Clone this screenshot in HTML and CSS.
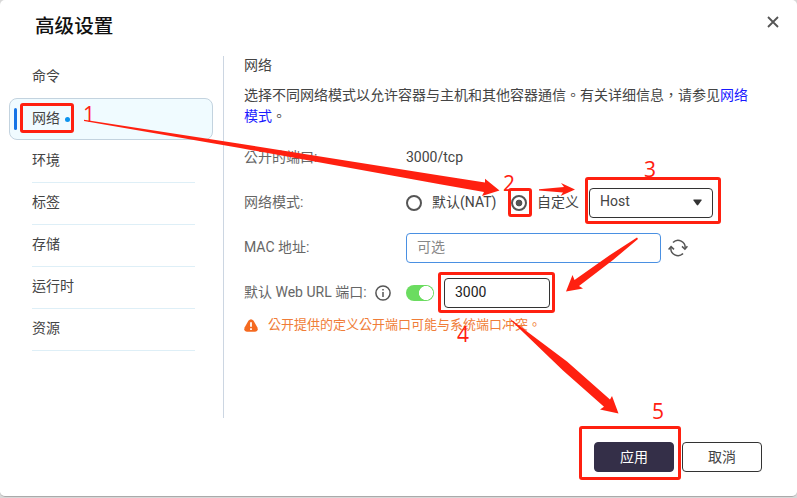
FILE: index.html
```html
<!DOCTYPE html>
<html lang="zh-Hant">
<head>
<meta charset="utf-8">
<title>高级设置</title>
<link rel="stylesheet" href="styles.css">
</head>
<body>
<div class="dialog">
  <header class="header">
    <h1 class="title">高级设置</h1>
    <svg class="close" width="12" height="12" viewBox="0 0 12 12"><path d="M1 1L11 11M11 1L1 11"/></svg>
  </header>
  <div class="main">
    <nav class="nav">
      <a class="item plain"><span>命令</span></a>
      <a class="item selected"><i class="bar"></i><span>网络</span><i class="dot"></i></a>
      <a class="item"><span>环境</span></a>
      <a class="item"><span>标签</span></a>
      <a class="item"><span>存储</span></a>
      <a class="item"><span>运行时</span></a>
      <a class="item"><span>资源</span></a>
    </nav>
    <section class="content">
      <h2 class="heading">网络</h2>
      <p class="desc">选择不同网络模式以允许容器与主机和其他容器通信。有关详细信息，请参见<a class="link">网络模式</a>。</p>
      <div class="row"><span class="label">公开的端口:</span><span class="text">3000/tcp</span></div>
      <div class="row">
        <span class="label">网络模式:</span>
        <i class="radio"></i><span class="nat">默认(NAT)</span>
        <i class="radio on"></i><span class="custom">自定义</span>
        <div class="select"><span class="text">Host</span><svg width="9" height="7" viewBox="0 0 9 7"><path fill="#333" d="M.8.5H8.2Q9 .5 8.5 1.4L5.2 6.1Q4.5 7 3.8 6.1L.5 1.4Q0 .5.8.5Z"/></svg></div>
      </div>
      <div class="row">
        <span class="label">MAC 地址:</span>
        <div class="input mac">可选</div>
        <svg class="refresh" width="20" height="18" viewBox="0 0 20 18"><path d="M5 3.6A7 7 0 0 1 17 9.5M15 14.4A7 7 0 0 1 3 8.5"/><path d="M14 7.4L16.9 10.2L19.4 7.2M.6 10.6L3.1 7.6L6 10.4"/></svg>
      </div>
      <div class="row">
        <span class="label"><span>默认 Web URL 端口:</span><svg class="info" width="16" height="16" viewBox="0 0 16 16"><circle cx="8" cy="8" r="7.1"/><path d="M8 7V12M8 4V5.6"/></svg></span>
        <i class="toggle"></i>
        <div class="input port">3000</div>
      </div>
      <div class="warning"><svg width="14" height="13" viewBox="0 0 14 13"><path class="tri" d="M4.4 1.8Q7-1.2 9.6 1.8L13.3 8.2Q14.8 12.4 11.2 12.8H2.8Q-.8 12.4.7 8.2Z"/><path class="mark" d="M7 3.2V7.8M7 9.3V11"/></svg>公开提供的定义公开端口可能与系统端口冲突。</div>
    </section>
  </div>
  <footer class="footer"><button class="btn primary">应用</button><button class="btn">取消</button></footer>
</div>
<svg class="marks" width="797" height="498" viewBox="0 0 797 498">
  <g class="boxes">
    <rect x="21.5" y="104.5" width="51" height="27" rx="1.5"/>
    <rect x="509.5" y="189.5" width="21" height="26" rx="1.5"/>
    <rect x="586.5" y="178.5" width="133" height="44" rx="1.5"/>
    <rect x="439.5" y="273.5" width="114" height="38" rx="1.5"/>
    <rect x="580.5" y="427.5" width="99" height="51" rx="1.5"/>
  </g>
  <g class="arrows">
    <path d="M84 119.7L240 143.7L440 175.5L485 182.5L485 178.8L499.5 190.5L482 196L484 192L440 184.2L240 148L84 121Z"/>
    <path d="M539 189.2L564 187L561 183L575 189.5L560.5 196L563 192.5L539 190.6Z"/>
    <path d="M637 237.5L610 255L574.5 280L572.5 275L566 291.5L583 288.5L579 286L613 260L638 239Z"/>
    <path d="M511 319.5L567 361.5L610 399.5L612 396L618.5 413.5L600 409.5L604 406.7L563 370.5L511 320.5Z"/>
  </g>
  <g class="nums"><text x="83" y="122">1</text><text x="503" y="191">2</text><text x="644" y="177">3</text><text x="457" y="342">4</text><text x="652" y="419">5</text></g>
</svg>
</body>
</html>
```
FILE: styles.css
```css
* { box-sizing: border-box; }
body {
  margin: 0; height: 498px; overflow: hidden; background: #d8d8d8; color: #444;
  font: 14px/20px Roboto, "Noto Sans CJK TC", sans-serif;
}
.dialog {
  display: flex; flex-direction: column; width: 797px; height: 497px;
  background: #fff; border-bottom: 1px solid #aaa; border-radius: 5px;
}
.header { display: flex; justify-content: space-between; height: 56px; padding: 13px 18px 0 35px; }
.title { margin: 0; font-size: 19.6px; line-height: 27px; font-weight: 500; color: #111; }
.close { margin-top: 3px; }
.close path { stroke: #555; stroke-width: 1.8; fill: none; }
.main { display: flex; height: 362px; }
.nav { width: 224px; border-right: 1px solid #ccd6e2; padding-left: 32px; }
.item { display: flex; align-items: center; width: 163px; height: 42px; padding-bottom: 3px; border-bottom: 1px solid #deeff7; }
.item.plain { padding-bottom: 2px; border-color: transparent; }
.item.selected {
  width: 204px; margin-left: -23px; padding: 0 0 0 4px;
  background: #f0fbff; border: 1px solid #c3d3df; border-radius: 8px;
}
.selected span { padding-bottom: 2px; }
.selected + .item { height: 43px; }
.bar { width: 3px; height: 22px; margin-right: 15px; border-radius: 2px; background: #1473e6; }
.dot { width: 5px; height: 5px; margin-left: 5px; border-radius: 50%; background: #0b93ee; }
.content { padding-left: 20px; }
.heading { margin: 0; font-size: 14px; font-weight: 400; line-height: 18px; }
.desc { width: 508px; margin: 11px 0 8px; line-height: 21px; }
.link { color: #1a1aff; }
.row { display: flex; align-items: center; height: 45px; color: #444; }
.text, .nat, .custom { padding-bottom: 2px; }
.select .text { padding-bottom: 3px; }
.label { display: flex; align-items: center; width: 162px; color: #666; line-height: 19px; white-space: nowrap; }
.radio { width: 16px; height: 16px; border: 2px solid #555; border-radius: 50%; }
.radio.on { margin-left: 15px; background: radial-gradient(circle, #555 3px, #fff 3.7px); }
.nat { width: 64px; margin-left: 10px; white-space: nowrap; }
.custom { margin-left: 10px; }
.select {
  display: flex; align-items: center; justify-content: space-between;
  width: 124px; height: 30px; margin-left: 10px; padding: 0 10px; border: 1px solid #333; border-radius: 4px;
}
.input { height: 30px; padding: 0 10px; border: 1px solid #333; border-radius: 4px; line-height: 26px; }
.mac { width: 255px; border-color: #4a90e2; color: #888; }
.refresh { margin-left: 7px; }
.refresh path, .info { fill: none; stroke: #555; stroke-width: 1.5; }
.info { margin-left: 8px; }
.toggle { width: 28px; height: 16px; border-radius: 8px; background: radial-gradient(circle at 20px 8px, #fff 6.7px, #6bdc60 7.3px); }
.port { width: 106px; margin-left: 10px; color: #222; }
.warning { display: flex; align-items: center; height: 20px; color: #f07d38; font-size: 13px; }
.warning svg { margin-right: 10px; }
.tri { fill: #f56a20; }
.mark { stroke: #fff; stroke-width: 1.8; }
.footer { display: flex; gap: 8px; justify-content: flex-end; padding: 24px 35px 0 0; }
.btn { width: 80px; height: 30px; padding: 0; border: 1px solid #333; border-radius: 4px; background: #fff; color: #444; font: inherit; }
.btn.primary { background: #342f48; border-color: #342f48; color: #fff; }
.marks { position: absolute; left: 0; top: 0; }
.boxes { fill: none; stroke: #ff2010; stroke-width: 3; }
.arrows { fill: #ff2010; }
.nums { fill: #ff2010; font: 21px "Open Sans", sans-serif; }
```
